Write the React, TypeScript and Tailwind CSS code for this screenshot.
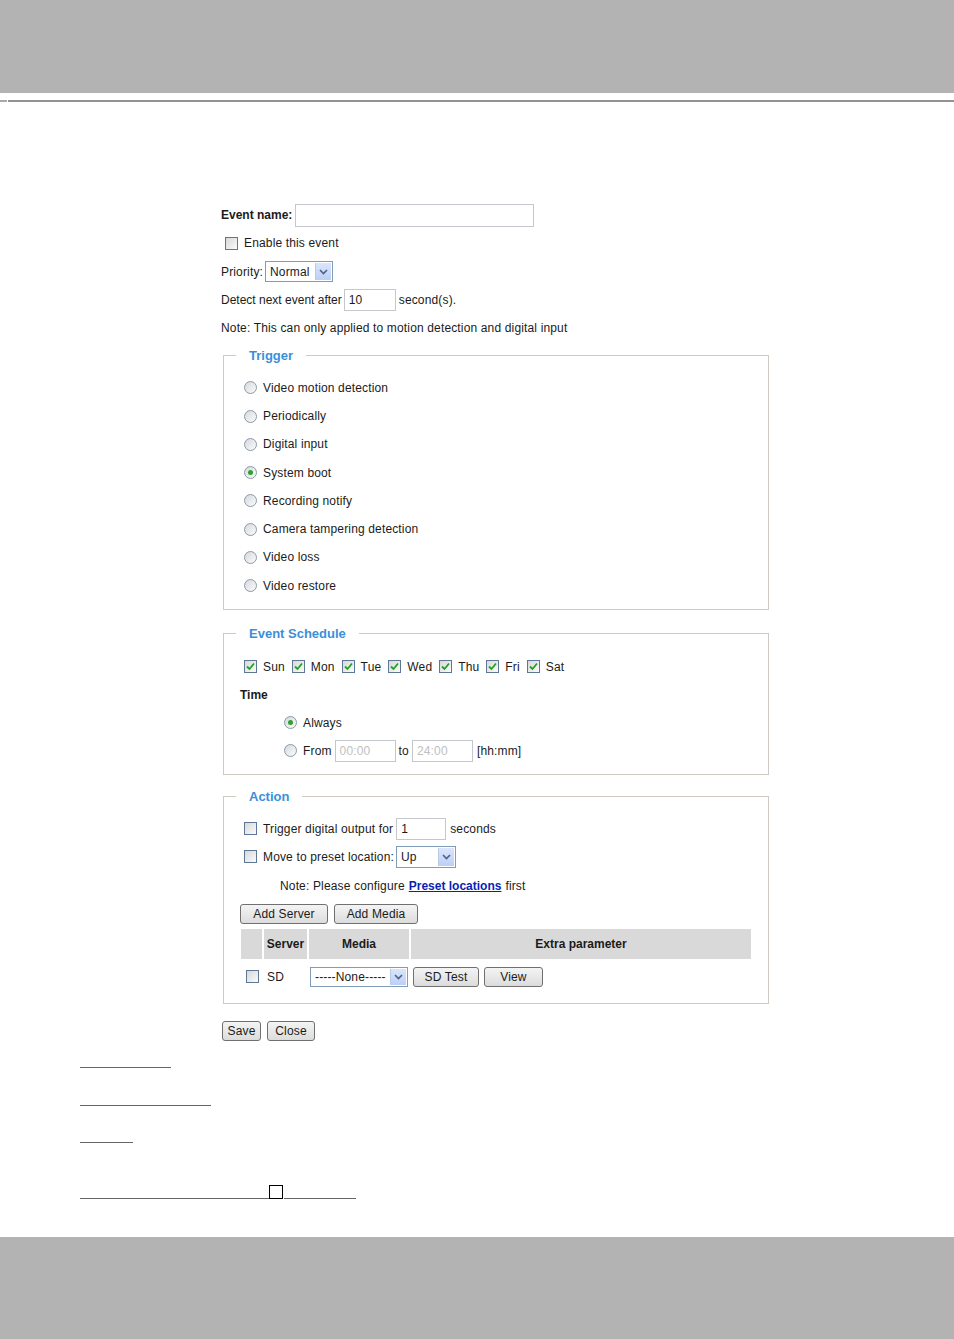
import React from "react";

const Check = ({ checked = false }: { checked?: boolean }) => (
  <span className="flex h-[13px] w-[13px] shrink-0 items-center justify-center border border-[#5d7896] bg-gradient-to-br from-[#d8d8d8] to-[#fbfbfb]">
    {checked && (
      <svg width="9" height="9" viewBox="0 0 9 9">
        <path d="M1 4.5 L3.5 7 L8 1.5" fill="none" stroke="#21a121" strokeWidth="1.8" />
      </svg>
    )}
  </span>
);

const Radio = ({ checked = false }: { checked?: boolean }) => (
  <span className="flex h-[13px] w-[13px] shrink-0 items-center justify-center rounded-full border border-[#8c99a6] bg-gradient-to-br from-[#d5d9de] to-[#fbfbfb]">
    {checked && <span className="h-[5px] w-[5px] rounded-full bg-[#2fa12f]" />}
  </span>
);

const Arrow = () => (
  <span className="flex h-full w-[16px] items-center justify-center border-l border-[#b9c9e6] bg-gradient-to-b from-[#dbe6fb] to-[#bccff7]">
    <svg width="9" height="6" viewBox="0 0 9 6">
      <path d="M1 1 L4.5 4.5 L8 1" fill="none" stroke="#4d6185" strokeWidth="1.6" />
    </svg>
  </span>
);

const Select = ({ w, h, text }: { w: string; h: string; text: string }) => (
  <span className={`flex ${w} ${h} items-stretch justify-between border border-[#7f9db9] bg-white p-[1px]`}>
    <span className="flex items-center pl-[3px] text-[12px] text-[#1b1b1b]">{text}</span>
    <Arrow />
  </span>
);

const Btn = ({ w, children }: { w: string; children: React.ReactNode }) => (
  <span className={`flex ${w} h-[20px] items-center justify-center rounded-[3px] border border-[#707070] bg-gradient-to-b from-[#f4f4f4] to-[#dcdcdc] text-[12px] text-[#1b1b1b]`}>
    {children}
  </span>
);

const Input = ({ w, h, value = "", disabled = false }: { w: string; h: string; value?: string; disabled?: boolean }) => (
  <span className={`flex ${w} ${h} items-center border border-[#c4c8cc] bg-white pl-[4px] text-[12px] ${disabled ? "text-[#c0c0c0]" : "text-[#1b1b1b]"}`}>
    {value}
  </span>
);

const triggers = [
  "Video motion detection",
  "Periodically",
  "Digital input",
  "System boot",
  "Recording notify",
  "Camera tampering detection",
  "Video loss",
  "Video restore",
];

const days = ["Sun", "Mon", "Tue", "Wed", "Thu", "Fri", "Sat"];

export default function App() {
  return (
    <div className="relative min-h-[1339px] w-[954px] bg-white text-[12px] tracking-[0.15px] text-[#1b1b1b]" style={{ fontFamily: '"Liberation Sans", Arial, sans-serif' }}>
      <div className="h-[93px] bg-[#b3b3b3]" />
      <div className="mt-[7px] flex h-[2px]">
        <div className="w-[7px] bg-[#a8a8a8]" />
        <div className="w-[1px] bg-white" />
        <div className="flex-1 bg-[#929292]" />
      </div>

      <div className="ml-[221px] mt-[99px] w-[548px]">
        <div className="flex h-[28px] items-center">
          <span className="font-bold tracking-normal">Event name:</span>
          <span className="ml-[3px] flex"><Input w="w-[239px]" h="h-[23px]" /></span>
        </div>
        <div className="flex h-[28.4px] items-center pl-[4px]">
          <Check />
          <span className="ml-[6px]">Enable this event</span>
        </div>
        <div className="flex h-[28.4px] items-center">
          <span>Priority:</span>
          <span className="ml-[2px] flex"><Select w="w-[68px]" h="h-[21px]" text="Normal" /></span>
        </div>
        <div className="flex h-[28.4px] items-center">
          <span className="tracking-normal">Detect next event after</span>
          <span className="ml-[2px] flex"><Input w="w-[52px]" h="h-[22px]" value="10" /></span>
          <span className="ml-[3px]">second(s).</span>
        </div>
        <div className="flex h-[28.4px] items-center">
          Note: This can only applied to motion detection and digital input
        </div>

        <fieldset className="ml-[2px] mt-[5px] w-[546px] border border-[#cfcbc4] pb-[9px]">
          <legend className="ml-[12px] px-[13px] text-[13px] font-bold leading-[16px] tracking-normal text-[#3b8fd9]">Trigger</legend>
          <div className="pl-[20px] pt-[10px]">
            {triggers.map((t, i) => (
              <div key={t} className="flex h-[28.3px] items-center">
                <Radio checked={i === 3} />
                <span className="ml-[6px]">{t}</span>
              </div>
            ))}
          </div>
        </fieldset>

        <fieldset className="ml-[2px] mt-[16px] w-[546px] border border-[#cfcbc4] pb-[11px]">
          <legend className="ml-[12px] px-[13px] text-[13px] font-bold leading-[16px] tracking-normal text-[#3b8fd9]">Event Schedule</legend>
          <div className="mt-[13px] flex h-[24px] items-center pl-[20px]">
            {days.map((d) => (
              <span key={d} className="mr-[7px] flex items-center">
                <Check checked />
                <span className="ml-[6px]">{d}</span>
              </span>
            ))}
          </div>
          <div className="mt-[4px] flex h-[24px] items-center pl-[16px] font-bold tracking-normal">Time</div>
          <div className="mt-[4px] flex h-[24px] items-center pl-[60px]">
            <Radio checked />
            <span className="ml-[6px]">Always</span>
          </div>
          <div className="mt-[4px] flex h-[24px] items-center pl-[60px]">
            <Radio />
            <span className="ml-[6px]">From</span>
            <span className="ml-[3px] flex"><Input w="w-[61px]" h="h-[22px]" value="00:00" disabled /></span>
            <span className="ml-[3px]">to</span>
            <span className="ml-[3px] flex"><Input w="w-[61px]" h="h-[22px]" value="24:00" disabled /></span>
            <span className="ml-[4px]">[hh:mm]</span>
          </div>
        </fieldset>

        <fieldset className="ml-[2px] mt-[14px] w-[546px] border border-[#cfcbc4] pb-[15px]">
          <legend className="ml-[12px] px-[13px] text-[13px] font-bold leading-[16px] tracking-normal text-[#3b8fd9]">Action</legend>
          <div className="mt-[13px] flex h-[22px] items-center pl-[20px]">
            <Check />
            <span className="ml-[6px]">Trigger digital output for</span>
            <span className="ml-[3px] flex"><Input w="w-[50px]" h="h-[22px]" value="1" /></span>
            <span className="ml-[4px]">seconds</span>
          </div>
          <div className="mt-[6px] flex h-[22px] items-center pl-[20px]">
            <Check />
            <span className="ml-[6px]">Move to preset location:</span>
            <span className="ml-[2px] flex"><Select w="w-[60px]" h="h-[22px]" text="Up" /></span>
          </div>
          <div className="mt-[7px] flex h-[22px] items-center pl-[56px]">
            <span>Note: Please configure</span>
            <span className="ml-[4px] font-bold tracking-normal text-[#0b1fb6] underline">Preset locations</span>
            <span className="ml-[4px]">first</span>
          </div>
          <div className="mt-[7px] flex gap-[6px] pl-[16px]">
            <Btn w="w-[88px]">Add Server</Btn>
            <Btn w="w-[84px]">Add Media</Btn>
          </div>
          <div className="ml-[17px] mt-[5px] w-[510px]">
            <div className="flex h-[30px] gap-[2px] font-bold tracking-normal">
              <div className="w-[21px] bg-[#d9d9d9]" />
              <div className="flex w-[43px] items-center justify-center bg-[#d9d9d9]">Server</div>
              <div className="flex w-[100px] items-center justify-center bg-[#d9d9d9]">Media</div>
              <div className="flex flex-1 items-center justify-center bg-[#d9d9d9]">Extra parameter</div>
            </div>
            <div className="mt-[7px] flex h-[22px] items-center">
              <span className="ml-[5px] flex"><Check /></span>
              <span className="ml-[8px]">SD</span>
              <span className="ml-[26px] flex"><Select w="w-[98px]" h="h-[20px]" text="-----None-----" /></span>
              <span className="ml-[5px] flex"><Btn w="w-[66px]">SD Test</Btn></span>
              <span className="ml-[5px] flex"><Btn w="w-[59px]">View</Btn></span>
            </div>
          </div>
        </fieldset>

        <div className="mt-[17px] flex gap-[6px] pl-[1px]">
          <Btn w="w-[39px]">Save</Btn>
          <Btn w="w-[48px]">Close</Btn>
        </div>
      </div>

      <div className="ml-[80px] mt-[26px] h-[1px] w-[91px] bg-[#666]" />
      <div className="ml-[80px] mt-[37px] h-[1px] w-[131px] bg-[#666]" />
      <div className="ml-[80px] mt-[36px] h-[1px] w-[53px] bg-[#666]" />
      <div className="ml-[80px] mt-[42px] flex w-[276px] items-end">
        <div className="h-[1px] w-[189px] bg-[#666]" />
        <div className="h-[14px] w-[14px] border border-black" />
        <div className="ml-[1px] h-[1px] flex-1 bg-[#666]" />
      </div>

      <div className="absolute bottom-0 left-0 h-[102px] w-full bg-[#b3b3b3]" />
    </div>
  );
}
